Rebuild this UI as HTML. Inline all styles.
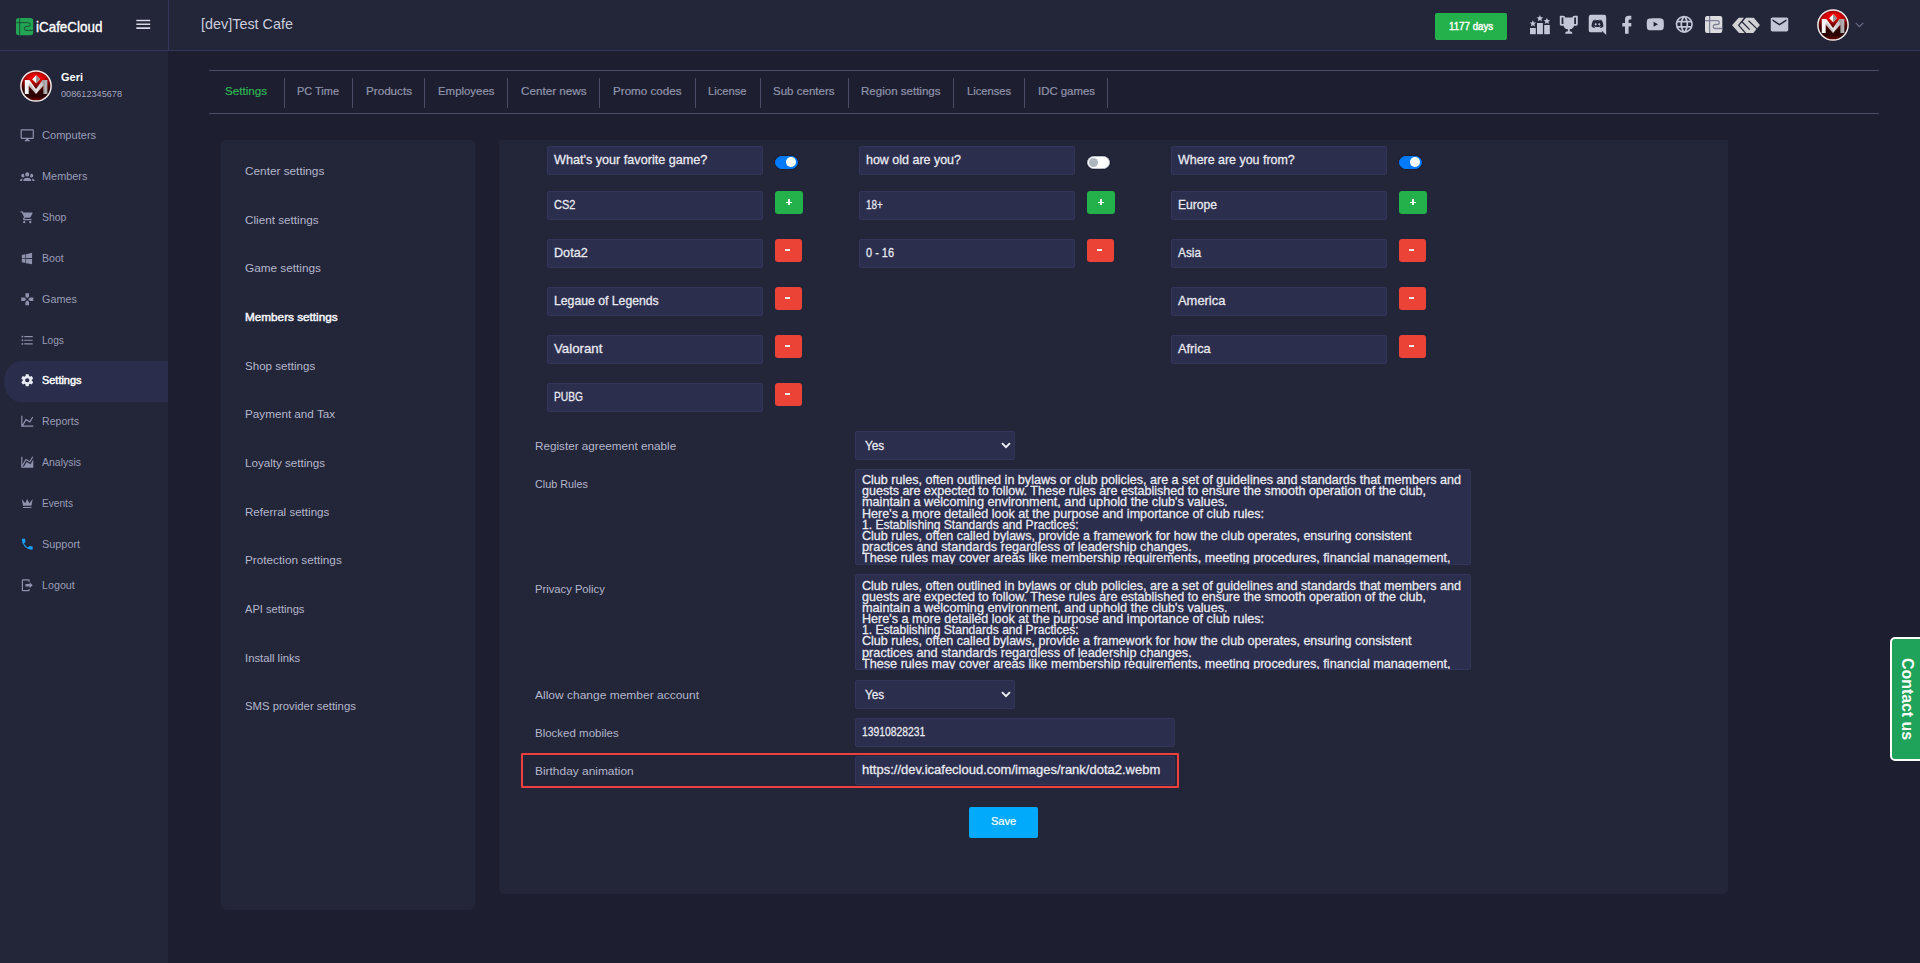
<!DOCTYPE html>
<html lang="en"><head><meta charset="utf-8"><title>iCafeCloud - Members settings</title>
<style>
*{box-sizing:border-box}
html,body{margin:0;padding:0}
header,aside,nav,section,main,footer{display:block;position:static}
body{width:1920px;height:963px;overflow:hidden;background:#1d1e30;font-family:'Liberation Sans', sans-serif;position:relative}
.t{position:absolute;white-space:pre;line-height:1;font-family:'Liberation Sans', sans-serif;transform-origin:0 50%}
.val{-webkit-text-stroke:.28px currentColor}
.logo{-webkit-text-stroke:.35px currentColor}
.tab{-webkit-text-stroke:.2px currentColor}
.semi{-webkit-text-stroke:.45px currentColor}
.ic{position:absolute;display:block;overflow:visible}
.hdr{position:absolute;left:0;top:0;width:1920px;height:51px;background:#232539;border-bottom:1px solid #33365a}
.hsep{position:absolute;left:168px;top:0;width:1px;height:50px;background:#33365a}
.side{position:absolute;left:0;top:51px;width:168px;height:912px;background:#232539}
.mact{position:absolute;left:4px;width:164px;height:41px;background:#2a2d4b;border-radius:17px 0 0 17px / 20.5px 0 0 20.5px}
.btn-days{position:absolute;background:#24b14b;border-radius:2px}
.hl{position:absolute;height:1px;background:#4a4c66}
.vl{position:absolute;width:1px;background:#4a4c66}
.panel{position:absolute;background:#232539}
.inp{position:absolute;height:28.7px;background:#2c2e4e;border:1px solid #33355a;border-radius:2px}
.tg{position:absolute;width:23.4px;height:13.4px;border-radius:7px;background:#fff;border:1px solid #b8bec6;box-shadow:0 0 0 .6px #17182a}
.tg i{position:absolute;left:1.4px;top:1.3px;width:8.8px;height:8.8px;border-radius:50%;background:#adb5bd}
.tg.on{background:#007bff;border-color:#007bff}
.tg.on i{left:10.1px;background:#fff;width:9.8px;height:9.8px;top:.4px}
.bplus,.bminus{position:absolute;height:23px;border-radius:3px}
.bplus{width:28px;background:#24b14b}
.bminus{width:27px;background:#eb4437}
.bplus b{position:absolute;left:11.2px;top:10.5px;width:6px;height:1.5px;background:#eefaf1}
.bplus s{position:absolute;left:13.45px;top:8.2px;width:1.5px;height:6px;background:#eefaf1}
.bminus b{position:absolute;left:10.4px;top:10.2px;width:5px;height:1.9px;background:#fbe9e7}
.hilite{position:absolute;border:2px solid #ef3f3f;border-radius:1px}
.btn-save{position:absolute;background:#02aafb;border-radius:2px}
.contact{position:absolute;left:1890px;top:637px;width:40px;height:124px;background:#1fa35b;border:2px solid #fff;border-radius:5px 0 0 5px}
.contact span{position:absolute;left:5.8px;top:19.3px;writing-mode:vertical-rl;font:bold 15.9px/19px 'Liberation Sans', sans-serif;color:#fff;white-space:nowrap}
</style></head>
<body>
<svg width="0" height="0" style="position:absolute"><defs>
<linearGradient id="avg" x1="0" y1="0" x2="0" y2="1"><stop offset="0" stop-color="#d80000"/><stop offset=".16" stop-color="#ff0404"/><stop offset=".32" stop-color="#d80000"/><stop offset=".5" stop-color="#7a0000"/><stop offset=".68" stop-color="#2c0000"/><stop offset=".84" stop-color="#360000"/><stop offset=".95" stop-color="#980000"/><stop offset="1" stop-color="#b00000"/></linearGradient>
<radialGradient id="avs" cx="50%" cy="45%" r="52%"><stop offset=".55" stop-color="#000" stop-opacity="0"/><stop offset="1" stop-color="#200" stop-opacity=".55"/></radialGradient>
<linearGradient id="avm" x1="0" y1="0" x2="1" y2="0"><stop offset="0" stop-color="#fbfbfb"/><stop offset=".5" stop-color="#e6e6e6"/><stop offset="1" stop-color="#a8a8a8"/></linearGradient>
</defs></svg>
<header>
<div class="hdr"></div><div class="hsep"></div>
<svg class="ic" style="left:16px;top:17.8px" width="17.2" height="17.2" viewBox="0 0 17.3 17.3"><rect width="17.3" height="17.3" rx="2.6" fill="#22a454"/><path d="M3.7 0.4V16.9M0.3 4.7H12.3Q14.3 4.7 14.3 6.6Q14.3 8.5 12.3 8.5H10.2Q8.3 8.5 8.3 10.5Q8.3 12.5 10.2 12.5H17" fill="none" stroke="#174a32" stroke-width="0.95"/></svg>
<svg class="ic" style="left:133.80px;top:14.60px" width="18.5" height="18.5" viewBox="0 0 24 24"><path fill="#d5d7e4" d="M3,6H21V8H3V6M3,11H21V13H3V11M3,16H21V18H3V16Z"/></svg>
<div class="btn-days" style="left:1435px;top:13px;width:72px;height:27px"></div>
<svg class="ic" style="left:1529px;top:14px" width="22" height="21" viewBox="0 0 22 21"><g fill="#c3c6d7">
<rect x="1" y="14" width="5.8" height="6.2"/><rect x="8" y="9" width="5.9" height="11.2"/><rect x="15.2" y="11" width="5.6" height="9.2"/>
<path id="st" d="M0,-3.4L0.95,-1.15L3.3,-1.05L1.5,0.5L2.05,2.85L0,1.6L-2.05,2.85L-1.5,0.5L-3.3,-1.05L-0.95,-1.15Z" transform="translate(3.9,9.6)"/>
<path d="M0,-3.4L0.95,-1.15L3.3,-1.05L1.5,0.5L2.05,2.85L0,1.6L-2.05,2.85L-1.5,0.5L-3.3,-1.05L-0.95,-1.15Z" transform="translate(10.9,4.4)"/>
<path d="M0,-3.4L0.95,-1.15L3.3,-1.05L1.5,0.5L2.05,2.85L0,1.6L-2.05,2.85L-1.5,0.5L-3.3,-1.05L-0.95,-1.15Z" transform="translate(17.9,7.2)"/>
</g></svg>
<svg class="ic" style="left:1558.20px;top:13.60px" width="21.6" height="21.6" viewBox="0 0 24 24"><path fill="#c3c6d7" d="M20.2,2H19.5H18C17.1,2 16,3 16,4H8C8,3 6.9,2 6,2H4.5H3.8H2V11C2,12 3,13 4,13H6.2C6.6,15 7.9,16.7 11,17V19.1C8.8,19.3 8,20.4 8,21.7V22H16V21.7C16,20.4 15.2,19.3 13,19.1V17C16.1,16.7 17.4,15 17.8,13H20C21,13 22,12 22,11V2H20.2M4,11V4H6V6V11C5.1,11 4.3,11 4,11M20,11C19.7,11 18.9,11 18,11V6V4H20V11Z"/></svg>
<svg class="ic" style="left:1587.20px;top:13.90px" width="20.952" height="20.952" viewBox="0 0 24 24"><path fill="#c3c6d7" d="M22,24L16.75,19L17.38,21H4.5A2.5,2.5 0 0,1 2,18.5V3.5A2.5,2.5 0 0,1 4.5,1H19.5A2.5,2.5 0 0,1 22,3.5V24M12,6.8C9.32,6.8 7.44,7.95 7.44,7.95C8.47,7.03 10.27,6.5 10.27,6.5L10.1,6.33C8.41,6.36 6.88,7.53 6.88,7.53C5.16,11.12 5.27,14.22 5.27,14.22C6.67,16.03 8.75,15.9 8.75,15.9L9.46,15C8.21,14.73 7.42,13.62 7.42,13.62C7.42,13.62 9.3,14.9 12,14.9C14.7,14.9 16.58,13.62 16.58,13.62C16.58,13.62 15.79,14.73 14.54,15L15.25,15.9C15.25,15.9 17.33,16.03 18.73,14.22C18.73,14.22 18.84,11.12 17.12,7.53C17.12,7.53 15.59,6.36 13.9,6.33L13.73,6.5C13.73,6.5 15.53,7.03 16.56,7.95C16.56,7.95 14.68,6.8 12,6.8M9.93,10.59C10.58,10.59 11.11,11.16 11.1,11.86C11.1,12.55 10.58,13.13 9.93,13.13C9.29,13.13 8.77,12.55 8.77,11.86C8.77,11.16 9.28,10.59 9.93,10.59M14.1,10.59C14.75,10.59 15.27,11.16 15.27,11.86C15.27,12.55 14.75,13.13 14.1,13.13C13.46,13.13 12.94,12.55 12.94,11.86C12.94,11.16 13.45,10.59 14.1,10.59Z"/></svg>
<svg class="ic" style="left:1615.50px;top:13.60px" width="21.6" height="21.6" viewBox="0 0 24 24"><path fill="#c3c6d7" d="M17,2V2H17V6H15C14.31,6 14,6.81 14,7.5V10H14L17,10V14H14V22H10V14H7V10H10V6A4,4 0 0,1 14,2H17Z"/></svg>
<svg class="ic" style="left:1645.20px;top:14.10px" width="20.6" height="20.6" viewBox="0 0 24 24"><path fill="#c3c6d7" d="M10,15L15.19,12L10,9V15M21.56,7.17C21.69,7.64 21.78,8.27 21.84,9.07C21.91,9.87 21.94,10.56 21.94,11.16L22,12C22,14.19 21.84,15.8 21.56,16.83C21.31,17.73 20.73,18.31 19.83,18.56C19.36,18.69 18.5,18.78 17.18,18.84C15.88,18.91 14.69,18.94 13.59,18.94L12,19C7.81,19 5.2,18.84 4.17,18.56C3.27,18.31 2.69,17.73 2.44,16.83C2.31,16.36 2.22,15.73 2.16,14.93C2.09,14.13 2.06,13.44 2.06,12.84L2,12C2,9.81 2.16,8.2 2.44,7.17C2.69,6.27 3.27,5.69 4.17,5.44C4.64,5.31 5.5,5.22 6.82,5.16C8.12,5.09 9.31,5.06 10.41,5.06L12,5C16.19,5 18.8,5.16 19.83,5.44C20.73,5.69 21.31,6.27 21.56,7.17Z"/></svg>
<svg class="ic" style="left:1674.30px;top:14.10px" width="20.6" height="20.6" viewBox="0 0 24 24"><path fill="#c3c6d7" d="M16.36,14C16.44,13.34 16.5,12.68 16.5,12C16.5,11.32 16.44,10.66 16.36,10H19.74C19.9,10.64 20,11.31 20,12C20,12.69 19.9,13.36 19.74,14M14.59,19.56C15.19,18.45 15.65,17.25 15.97,16H18.92C17.96,17.65 16.43,18.93 14.59,19.56M14.34,14H9.66C9.56,13.34 9.5,12.68 9.5,12C9.5,11.32 9.56,10.65 9.66,10H14.34C14.43,10.65 14.5,11.32 14.5,12C14.5,12.68 14.43,13.34 14.34,14M12,19.96C11.17,18.76 10.5,17.43 10.09,16H13.91C13.5,17.43 12.83,18.76 12,19.96M8,8H5.08C6.03,6.34 7.57,5.06 9.4,4.44C8.8,5.55 8.35,6.75 8,8M5.08,16H8C8.35,17.25 8.8,18.45 9.4,19.56C7.57,18.93 6.03,17.65 5.08,16M4.26,14C4.1,13.36 4,12.69 4,12C4,11.31 4.1,10.64 4.26,10H7.64C7.56,10.66 7.5,11.32 7.5,12C7.5,12.68 7.56,13.34 7.64,14M12,4.03C12.83,5.23 13.5,6.57 13.91,8H10.09C10.5,6.57 11.17,5.23 12,4.03M18.92,8H15.97C15.65,6.75 15.19,5.55 14.59,4.44C16.43,5.07 17.96,6.34 18.92,8M12,2C6.47,2 2,6.5 2,12A10,10 0 0,0 12,22A10,10 0 0,0 22,12A10,10 0 0,0 12,2Z"/></svg>
<svg class="ic" style="left:1705.3px;top:16.2px" width="17.3" height="17" viewBox="0 0 17.3 17"><rect width="17.3" height="17" rx="2.2" fill="#dcdcde"/><path d="M4.6 0V17M0 4.7H12.3Q14.3 4.7 14.3 6.6Q14.3 8.5 12.3 8.5H10.2Q8.3 8.5 8.3 10.5Q8.3 12.5 10.2 12.5H17.3" fill="none" stroke="#7d8097" stroke-width="1.3"/></svg>
<svg class="ic" style="left:1726px;top:12px" width="40" height="26" viewBox="0 0 40 26"><g fill="#d2d2d5">
<path d="M6.07 13.2L12.7 5.8H17.95L11.9 13.2L18.6 20.9H13Z"/>
<path d="M20 5.8H27.8L33.9 13L27.3 20.9H20.2L13.5 13.2Z"/></g>
<path d="M15.7 9.5L23.7 17.6M22.5 8.8L31.6 17.4" stroke="#232539" stroke-width="1.2" fill="none"/></svg>
<svg class="ic" style="left:1768.90px;top:14.00px" width="21" height="21" viewBox="0 0 24 24"><path fill="#c3c6d7" d="M20,8L12,13L4,8V6L12,11L20,6M20,4H4C2.89,4 2,4.89 2,6V18A2,2 0 0,0 4,20H20A2,2 0 0,0 22,18V6C22,4.89 21.1,4 20,4Z"/></svg>
<svg class="ic" style="left:1817px;top:9px" width="32" height="32" viewBox="0 0 32 32"><circle cx="16" cy="16" r="15.2" fill="url(#avg)"/><circle cx="16" cy="16" r="15.2" fill="url(#avs)"/><circle cx="16" cy="16" r="15.1" fill="none" stroke="#f3ecec" stroke-width="1.5"/><path d="M4.8 24.1 V10 H9.4 L16 19.1 L22.6 10 H27.4 V24.1 H23.5 V15.6 L16 24 L8.7 15.6 V24.1 Z" fill="url(#avm)"/><path d="M21.4 11.6 L23.5 15.6 V24.1 H25 V10 H22.6 Z" fill="#8d8d8d" opacity=".55"/><path d="M8.7 15.6 L16 24 L16 21.4 L9.6 13 Z" fill="#8d8d8d" opacity=".45"/><path d="M16.1 5.2 L20.1 9.2 L16.1 13.2 L12.1 9.2 Z" fill="#fafafa"/><path d="M16.1 5.2 L20.1 9.2 L16.1 13.2 Z" fill="#8f8f8f"/></svg>
<svg class="ic" style="left:1855px;top:22px" width="9" height="6" viewBox="0 0 9 6"><path d="M0.7 0.9 L4.5 4.7 L8.3 0.9" fill="none" stroke="#686d8a" stroke-width="1.2"/></svg>
<span class="t logo" style="left:35.50px;top:20.25px;font-size:14.2px;color:#ffffff;transform:scaleX(0.9458);">iCafeCloud</span>
<span class="t" style="left:201.00px;top:16.25px;font-size:15px;color:#cbcddc;transform:scaleX(0.9594);">[dev]Test Cafe</span>
<span class="t semi" style="left:1449.30px;top:21.25px;font-size:11px;color:#ffffff;transform:scaleX(0.8848);">1177 days</span>
</header>
<aside>
<div class="side"></div>
<svg class="ic" style="left:20px;top:70px" width="32" height="32" viewBox="0 0 32 32"><circle cx="16" cy="16" r="15.2" fill="url(#avg)"/><circle cx="16" cy="16" r="15.2" fill="url(#avs)"/><circle cx="16" cy="16" r="15.1" fill="none" stroke="#f3ecec" stroke-width="1.5"/><path d="M4.8 24.1 V10 H9.4 L16 19.1 L22.6 10 H27.4 V24.1 H23.5 V15.6 L16 24 L8.7 15.6 V24.1 Z" fill="url(#avm)"/><path d="M21.4 11.6 L23.5 15.6 V24.1 H25 V10 H22.6 Z" fill="#8d8d8d" opacity=".55"/><path d="M8.7 15.6 L16 24 L16 21.4 L9.6 13 Z" fill="#8d8d8d" opacity=".45"/><path d="M16.1 5.2 L20.1 9.2 L16.1 13.2 L12.1 9.2 Z" fill="#fafafa"/><path d="M16.1 5.2 L20.1 9.2 L16.1 13.2 Z" fill="#8f8f8f"/></svg>
<svg class="ic" style="left:19.50px;top:128.35px" width="14.5" height="14.5" viewBox="0 0 24 24"><path fill="#8d91ab" d="M21,16H3V4H21M21,2H3C1.89,2 1,2.89 1,4V16A2,2 0 0,0 3,18H10V20H8V22H16V20H14V18H21A2,2 0 0,0 23,16V4C23,2.89 22.1,2 21,2Z"/></svg>
<svg class="ic" style="left:19.50px;top:169.35px" width="14.5" height="14.5" viewBox="0 0 24 24"><path fill="#8d91ab" d="M12,5.5A3.5,3.5 0 0,1 15.5,9A3.5,3.5 0 0,1 12,12.5A3.5,3.5 0 0,1 8.5,9A3.5,3.5 0 0,1 12,5.5M5,8C5.56,8 6.08,8.15 6.53,8.42C6.38,9.85 6.8,11.27 7.66,12.38C7.16,13.34 6.16,14 5,14A3,3 0 0,1 2,11A3,3 0 0,1 5,8M19,8A3,3 0 0,1 22,11A3,3 0 0,1 19,14C17.84,14 16.84,13.34 16.34,12.38C17.2,11.27 17.62,9.85 17.47,8.42C17.92,8.15 18.44,8 19,8M5.5,18.25C5.5,16.18 8.41,14.5 12,14.5C15.59,14.5 18.5,16.18 18.5,18.25V20H5.5V18.25M0,20V18.5C0,17.11 1.89,15.94 4.45,15.6C3.86,16.28 3.5,17.22 3.5,18.25V20H0M24,20H20.5V18.25C20.5,17.22 20.14,16.28 19.55,15.6C22.11,15.94 24,17.11 24,18.5V20Z"/></svg>
<svg class="ic" style="left:19.50px;top:210.35px" width="14.5" height="14.5" viewBox="0 0 24 24"><path fill="#8d91ab" d="M17,18C15.89,18 15,18.89 15,20A2,2 0 0,0 17,22A2,2 0 0,0 19,20C19,18.89 18.1,18 17,18M1,2V4H3L6.6,11.59L5.24,14.04C5.09,14.32 5,14.65 5,15A2,2 0 0,0 7,17H19V15H7.42A0.25,0.25 0 0,1 7.17,14.75C7.17,14.7 7.18,14.66 7.2,14.63L8.1,13H15.55C16.3,13 16.96,12.58 17.3,11.97L20.88,5.5C20.95,5.34 21,5.17 21,5A1,1 0 0,0 20,4H5.21L4.27,2M7,18C5.89,18 5,18.89 5,20A2,2 0 0,0 7,22A2,2 0 0,0 9,20C9,18.89 8.1,18 7,18Z"/></svg>
<svg class="ic" style="left:19.50px;top:251.35px" width="14.5" height="14.5" viewBox="0 0 24 24"><path fill="#8d91ab" d="M3,12V6.75L9,5.43V11.91L3,12M20,3V11.75L10,11.9V5.21L20,3M3,13L9,13.09V19.9L3,18.75V13M20,13.25V22L10,20.09V13.1L20,13.25Z"/></svg>
<svg class="ic" style="left:19.50px;top:292.35px" width="14.5" height="14.5" viewBox="0 0 24 24"><path fill="#8d91ab" d="M16.5,9L13.5,12L16.5,15H22V9M9,16.5V22H15V16.5L12,13.5M7.5,9H2V15H7.5L10.5,12M15,7.5V2H9V7.5L12,10.5L15,7.5Z"/></svg>
<svg class="ic" style="left:19.50px;top:333.35px" width="14.5" height="14.5" viewBox="0 0 24 24"><path fill="#8d91ab" d="M7,5H21V7H7V5M7,13V11H21V13H7M4,4.5A1.5,1.5 0 0,1 5.5,6A1.5,1.5 0 0,1 4,7.5A1.5,1.5 0 0,1 2.5,6A1.5,1.5 0 0,1 4,4.5M4,10.5A1.5,1.5 0 0,1 5.5,12A1.5,1.5 0 0,1 4,13.5A1.5,1.5 0 0,1 2.5,12A1.5,1.5 0 0,1 4,10.5M7,19V17H21V19H7M4,16.5A1.5,1.5 0 0,1 5.5,18A1.5,1.5 0 0,1 4,19.5A1.5,1.5 0 0,1 2.5,18A1.5,1.5 0 0,1 4,16.5Z"/></svg>
<div class="mact" style="top:360.9px"></div>
<svg class="ic" style="left:19.50px;top:373.35px" width="14.5" height="14.5" viewBox="0 0 24 24"><path fill="#e6e8f2" d="M12,15.5A3.5,3.5 0 0,1 8.5,12A3.5,3.5 0 0,1 12,8.5A3.5,3.5 0 0,1 15.5,12A3.5,3.5 0 0,1 12,15.5M19.43,12.97C19.47,12.65 19.5,12.33 19.5,12C19.5,11.67 19.47,11.34 19.43,11L21.54,9.37C21.73,9.22 21.78,8.95 21.66,8.73L19.66,5.27C19.54,5.05 19.27,4.96 19.05,5.05L16.56,6.05C16.04,5.66 15.5,5.32 14.87,5.07L14.5,2.42C14.46,2.18 14.25,2 14,2H10C9.75,2 9.54,2.18 9.5,2.42L9.13,5.07C8.5,5.32 7.96,5.66 7.44,6.05L4.95,5.05C4.73,4.96 4.46,5.05 4.34,5.27L2.34,8.73C2.21,8.95 2.27,9.22 2.46,9.37L4.57,11C4.53,11.34 4.5,11.67 4.5,12C4.5,12.33 4.53,12.65 4.57,12.97L2.46,14.63C2.27,14.78 2.21,15.05 2.34,15.27L4.34,18.73C4.46,18.95 4.73,19.03 4.95,18.95L7.44,17.94C7.96,18.34 8.5,18.68 9.13,18.93L9.5,21.58C9.54,21.82 9.75,22 10,22H14C14.25,22 14.46,21.82 14.5,21.58L14.87,18.93C15.5,18.67 16.04,18.34 16.56,17.94L19.05,18.95C19.27,19.03 19.54,18.95 19.66,18.73L21.66,15.27C21.78,15.05 21.73,14.78 21.54,14.63L19.43,12.97Z"/></svg>
<svg class="ic" style="left:19.50px;top:414.35px" width="14.5" height="14.5" viewBox="0 0 24 24"><path fill="#8d91ab" d="M16,11.78L20.24,4.45L21.97,5.45L16.74,14.5L10.23,10.75L5.46,19H22V21H2V3H4V17.54L9.5,8L16,11.78Z"/></svg>
<svg class="ic" style="left:19.50px;top:455.35px" width="14.5" height="14.5" viewBox="0 0 24 24"><path fill="#8d91ab" d="M17.45,15.18L22,7.31V19L22,21H2V3H4V15.54L9.5,6L16,9.78L20.24,2.45L21.97,3.45L16.74,12.5L10.23,8.75L4.31,19H6.57L10.96,11.44L17.45,15.18Z"/></svg>
<svg class="ic" style="left:19.50px;top:496.35px" width="14.5" height="14.5" viewBox="0 0 24 24"><path fill="#8d91ab" d="M5,16L3,5L8.5,12L12,5L15.5,12L21,5L19,16H5M19,19A1,1 0 0,1 18,20H6A1,1 0 0,1 5,19V18H19V19Z"/></svg>
<svg class="ic" style="left:19.50px;top:537.35px" width="14.5" height="14.5" viewBox="0 0 24 24"><path fill="#18a0fb" d="M6.62,10.79C8.06,13.62 10.38,15.94 13.21,17.38L15.41,15.18C15.69,14.9 16.08,14.82 16.43,14.93C17.55,15.3 18.75,15.5 20,15.5A1,1 0 0,1 21,16.5V20A1,1 0 0,1 20,21A17,17 0 0,1 3,4A1,1 0 0,1 4,3H7.5A1,1 0 0,1 8.5,4C8.5,5.25 8.7,6.45 9.07,7.57C9.18,7.92 9.1,8.31 8.82,8.59L6.62,10.79Z"/></svg>
<svg class="ic" style="left:19.50px;top:578.35px" width="14.5" height="14.5" viewBox="0 0 24 24"><path fill="#8d91ab" d="M16,17V14H9V10H16V7L21,12L16,17M14,2A2,2 0 0,1 16,4V6H14V4H5V20H14V18H16V20A2,2 0 0,1 14,22H5A2,2 0 0,1 3,20V4A2,2 0 0,1 5,2H14Z"/></svg>
<span class="t" style="left:61.00px;top:72.25px;font-size:11.5px;color:#ffffff;font-weight:700;transform:scaleX(0.9559);">Geri</span>
<span class="t" style="left:61.00px;top:89.25px;font-size:10px;color:#a3a7bd;transform:scale(0.9139,0.84);transform-origin:0 8px;">008612345678</span>
<span class="t" style="left:42.40px;top:130.25px;font-size:11px;color:#9a9eb6;transform:scaleX(1.0056);">Computers</span>
<span class="t" style="left:42.40px;top:171.25px;font-size:11px;color:#9a9eb6;transform:scaleX(0.9903);">Members</span>
<span class="t" style="left:42.40px;top:212.25px;font-size:11px;color:#9a9eb6;transform:scaleX(0.9493);">Shop</span>
<span class="t" style="left:42.40px;top:253.25px;font-size:11px;color:#9a9eb6;transform:scaleX(0.9585);">Boot</span>
<span class="t" style="left:42.40px;top:294.25px;font-size:11px;color:#9a9eb6;transform:scaleX(0.9840);">Games</span>
<span class="t" style="left:42.40px;top:335.25px;font-size:11px;color:#9a9eb6;transform:scaleX(0.9179);">Logs</span>
<span class="t semi" style="left:42.40px;top:375.25px;font-size:11px;color:#ffffff;transform:scaleX(0.9937);">Settings</span>
<span class="t" style="left:42.40px;top:416.25px;font-size:11px;color:#9a9eb6;transform:scaleX(0.9603);">Reports</span>
<span class="t" style="left:42.40px;top:457.25px;font-size:11px;color:#9a9eb6;transform:scaleX(0.9544);">Analysis</span>
<span class="t" style="left:42.40px;top:498.25px;font-size:11px;color:#9a9eb6;transform:scaleX(0.9215);">Events</span>
<span class="t" style="left:42.40px;top:539.25px;font-size:11px;color:#9a9eb6;transform:scaleX(0.9888);">Support</span>
<span class="t" style="left:42.40px;top:580.25px;font-size:11px;color:#9a9eb6;transform:scaleX(0.9746);">Logout</span>
</aside>
<nav>
<div class="hl" style="left:209px;top:70px;width:1670px"></div><div class="hl" style="left:209px;top:113px;width:1670px"></div>
<div class="vl" style="left:284px;top:78px;height:30px"></div>
<div class="vl" style="left:352px;top:78px;height:30px"></div>
<div class="vl" style="left:424px;top:78px;height:30px"></div>
<div class="vl" style="left:507px;top:78px;height:30px"></div>
<div class="vl" style="left:599px;top:78px;height:30px"></div>
<div class="vl" style="left:695px;top:78px;height:30px"></div>
<div class="vl" style="left:760px;top:78px;height:30px"></div>
<div class="vl" style="left:848px;top:78px;height:30px"></div>
<div class="vl" style="left:953px;top:78px;height:30px"></div>
<div class="vl" style="left:1024px;top:78px;height:30px"></div>
<div class="vl" style="left:1107px;top:78px;height:30px"></div>
<span class="t tab" style="left:224.50px;top:86.25px;font-size:11px;color:#2db552;transform:scaleX(1.0566);">Settings</span>
<span class="t tab" style="left:297.00px;top:86.25px;font-size:11px;color:#9195ab;transform:scaleX(0.9956);">PC Time</span>
<span class="t tab" style="left:365.50px;top:86.25px;font-size:11px;color:#9195ab;transform:scaleX(1.0594);">Products</span>
<span class="t tab" style="left:438.00px;top:86.25px;font-size:11px;color:#9195ab;transform:scaleX(1.0382);">Employees</span>
<span class="t tab" style="left:521.00px;top:86.25px;font-size:11px;color:#9195ab;transform:scaleX(1.0605);">Center news</span>
<span class="t tab" style="left:613.00px;top:86.25px;font-size:11px;color:#9195ab;transform:scaleX(1.0569);">Promo codes</span>
<span class="t tab" style="left:708.00px;top:86.25px;font-size:11px;color:#9195ab;transform:scaleX(1.0152);">License</span>
<span class="t tab" style="left:773.00px;top:86.25px;font-size:11px;color:#9195ab;transform:scaleX(1.0476);">Sub centers</span>
<span class="t tab" style="left:861.00px;top:86.25px;font-size:11px;color:#9195ab;transform:scaleX(1.0484);">Region settings</span>
<span class="t tab" style="left:967.00px;top:86.25px;font-size:11px;color:#9195ab;transform:scaleX(1.0133);">Licenses</span>
<span class="t tab" style="left:1037.50px;top:86.25px;font-size:11px;color:#9195ab;transform:scaleX(1.0358);">IDC games</span>
</nav>
<section>
<div class="panel" style="left:221px;top:140px;width:254px;height:770px;border-radius:5px"></div>
<span class="t" style="left:244.50px;top:166.25px;font-size:11px;color:#b4b7cb;transform:scaleX(1.0718);">Center settings</span>
<span class="t" style="left:244.50px;top:215.25px;font-size:11px;color:#b4b7cb;transform:scaleX(1.0638);">Client settings</span>
<span class="t" style="left:244.50px;top:263.25px;font-size:11px;color:#b4b7cb;transform:scaleX(1.0716);">Game settings</span>
<span class="t semi" style="left:244.50px;top:312.25px;font-size:11px;color:#f6f7fb;transform:scaleX(1.0667);">Members settings</span>
<span class="t" style="left:244.50px;top:361.25px;font-size:11px;color:#b4b7cb;transform:scaleX(1.0532);">Shop settings</span>
<span class="t" style="left:244.50px;top:409.25px;font-size:11px;color:#b4b7cb;transform:scaleX(1.0625);">Payment and Tax</span>
<span class="t" style="left:244.50px;top:458.25px;font-size:11px;color:#b4b7cb;transform:scaleX(1.0563);">Loyalty settings</span>
<span class="t" style="left:244.50px;top:507.25px;font-size:11px;color:#b4b7cb;transform:scaleX(1.0525);">Referral settings</span>
<span class="t" style="left:244.50px;top:555.25px;font-size:11px;color:#b4b7cb;transform:scaleX(1.0696);">Protection settings</span>
<span class="t" style="left:244.50px;top:604.25px;font-size:11px;color:#b4b7cb;transform:scaleX(1.0119);">API settings</span>
<span class="t" style="left:244.50px;top:653.25px;font-size:11px;color:#b4b7cb;transform:scaleX(1.0261);">Install links</span>
<span class="t" style="left:244.50px;top:701.25px;font-size:11px;color:#b4b7cb;transform:scaleX(1.0306);">SMS provider settings</span>
</section>
<main>
<div class="panel" style="left:499px;top:140px;width:1229px;height:754px;border-radius:0 0 5px 5px"></div>
<div class="inp" style="left:547px;top:146px;width:216px"></div>
<div class="tg on" style="left:775px;top:156px"><i></i></div>
<div class="inp" style="left:547px;top:191px;width:216px"></div>
<div class="bplus" style="left:775px;top:191px"><b></b><s></s></div>
<div class="inp" style="left:547px;top:239px;width:216px"></div>
<div class="bminus" style="left:775px;top:239px"><b></b></div>
<div class="inp" style="left:547px;top:287px;width:216px"></div>
<div class="bminus" style="left:775px;top:287px"><b></b></div>
<div class="inp" style="left:547px;top:335px;width:216px"></div>
<div class="bminus" style="left:775px;top:335px"><b></b></div>
<div class="inp" style="left:547px;top:383px;width:216px"></div>
<div class="bminus" style="left:775px;top:383px"><b></b></div>
<div class="inp" style="left:859px;top:146px;width:216px"></div>
<div class="tg" style="left:1087px;top:156px"><i></i></div>
<div class="inp" style="left:859px;top:191px;width:216px"></div>
<div class="bplus" style="left:1087px;top:191px"><b></b><s></s></div>
<div class="inp" style="left:859px;top:239px;width:216px"></div>
<div class="bminus" style="left:1087px;top:239px"><b></b></div>
<div class="inp" style="left:1171px;top:146px;width:216px"></div>
<div class="tg on" style="left:1399px;top:156px"><i></i></div>
<div class="inp" style="left:1171px;top:191px;width:216px"></div>
<div class="bplus" style="left:1399px;top:191px"><b></b><s></s></div>
<div class="inp" style="left:1171px;top:239px;width:216px"></div>
<div class="bminus" style="left:1399px;top:239px"><b></b></div>
<div class="inp" style="left:1171px;top:287px;width:216px"></div>
<div class="bminus" style="left:1399px;top:287px"><b></b></div>
<div class="inp" style="left:1171px;top:335px;width:216px"></div>
<div class="bminus" style="left:1399px;top:335px"><b></b></div>
<div class="inp" style="left:855px;top:431px;width:160px"></div>
<svg class="ic" style="left:1001.2px;top:441.8px" width="10" height="7" viewBox="0 0 10 7"><path d="M1 1.2 L5 5.2 L9 1.2" fill="none" stroke="#f0f1f6" stroke-width="1.9"/></svg>
<div class="inp" style="left:855px;top:680.3px;width:160px"></div>
<svg class="ic" style="left:1001.2px;top:691.0999999999999px" width="10" height="7" viewBox="0 0 10 7"><path d="M1 1.2 L5 5.2 L9 1.2" fill="none" stroke="#f0f1f6" stroke-width="1.9"/></svg>
<div class="inp ta" style="left:855px;top:469.1px;width:616px;height:95.5px"></div>
<div class="inp ta" style="left:855px;top:574.2px;width:616px;height:95.5px"></div>
<div class="inp" style="left:855px;top:718.3px;width:320px"></div>
<div class="hilite" style="left:521px;top:753px;width:658px;height:35px"></div>
<div class="inp" style="left:855px;top:756.2px;width:320px"></div>
<div class="btn-save" style="left:969px;top:807px;width:69px;height:31px"></div>
<span class="t val" style="left:553.70px;top:153.25px;font-size:13px;color:#e9eaf1;transform:scaleX(0.9719);">What's your favorite game?</span>
<span class="t val" style="left:553.70px;top:198.25px;font-size:13px;color:#e9eaf1;transform:scaleX(0.8460);">CS2</span>
<span class="t val" style="left:553.70px;top:246.25px;font-size:13px;color:#e9eaf1;transform:scaleX(0.9711);">Dota2</span>
<span class="t val" style="left:553.70px;top:294.25px;font-size:13px;color:#e9eaf1;transform:scaleX(0.9405);">Legaue of Legends</span>
<span class="t val" style="left:553.70px;top:342.25px;font-size:13px;color:#e9eaf1;transform:scaleX(1.0196);">Valorant</span>
<span class="t val" style="left:553.70px;top:390.25px;font-size:13px;color:#e9eaf1;transform:scaleX(0.7871);">PUBG</span>
<span class="t val" style="left:865.70px;top:153.25px;font-size:13px;color:#e9eaf1;transform:scaleX(0.9594);">how old are you?</span>
<span class="t val" style="left:865.70px;top:198.25px;font-size:13px;color:#e9eaf1;transform:scaleX(0.7569);">18+</span>
<span class="t val" style="left:865.70px;top:246.25px;font-size:13px;color:#e9eaf1;transform:scaleX(0.8421);">0 - 16</span>
<span class="t val" style="left:1177.70px;top:153.25px;font-size:13px;color:#e9eaf1;transform:scaleX(0.9557);">Where are you from?</span>
<span class="t val" style="left:1177.70px;top:198.25px;font-size:13px;color:#e9eaf1;transform:scaleX(0.9303);">Europe</span>
<span class="t val" style="left:1177.70px;top:246.25px;font-size:13px;color:#e9eaf1;transform:scaleX(0.9092);">Asia</span>
<span class="t val" style="left:1177.70px;top:294.25px;font-size:13px;color:#e9eaf1;transform:scaleX(0.9940);">America</span>
<span class="t val" style="left:1177.70px;top:342.25px;font-size:13px;color:#e9eaf1;transform:scaleX(0.9839);">Africa</span>
<span class="t" style="left:535.40px;top:441.25px;font-size:11px;color:#b4b7cb;transform:scaleX(1.0640);">Register agreement enable</span>
<span class="t" style="left:535.40px;top:479.25px;font-size:11px;color:#b4b7cb;transform:scaleX(0.9830);">Club Rules</span>
<span class="t" style="left:535.40px;top:584.25px;font-size:11px;color:#b4b7cb;transform:scaleX(1.0194);">Privacy Policy</span>
<span class="t" style="left:535.40px;top:690.25px;font-size:11px;color:#b4b7cb;transform:scaleX(1.0903);">Allow change member account</span>
<span class="t" style="left:535.40px;top:728.25px;font-size:11px;color:#b4b7cb;transform:scaleX(1.0450);">Blocked mobiles</span>
<span class="t" style="left:535.40px;top:766.25px;font-size:11px;color:#b4b7cb;transform:scaleX(1.0833);">Birthday animation</span>
<span class="t val" style="left:864.50px;top:439.25px;font-size:13px;color:#e9eaf1;transform:scaleX(0.9049);">Yes</span>
<span class="t val" style="left:864.50px;top:688.25px;font-size:13px;color:#e9eaf1;transform:scaleX(0.9049);">Yes</span>
<span class="t val" style="left:862.00px;top:473.25px;font-size:13px;color:#e9eaf1;transform:scaleX(0.9672);">Club rules, often outlined in bylaws or club policies, are a set of guidelines and standards that members and</span>
<span class="t val" style="left:862.00px;top:484.25px;font-size:13px;color:#e9eaf1;transform:scaleX(0.9639);">guests are expected to follow. These rules are established to ensure the smooth operation of the club,</span>
<span class="t val" style="left:862.00px;top:495.25px;font-size:13px;color:#e9eaf1;transform:scaleX(0.9758);">maintain a welcoming environment, and uphold the club's values.</span>
<span class="t val" style="left:862.00px;top:507.25px;font-size:13px;color:#e9eaf1;transform:scaleX(0.9684);">Here's a more detailed look at the purpose and importance of club rules:</span>
<span class="t val" style="left:862.00px;top:518.25px;font-size:13px;color:#e9eaf1;transform:scaleX(0.9279);">1. Establishing Standards and Practices:</span>
<span class="t val" style="left:862.00px;top:529.25px;font-size:13px;color:#e9eaf1;transform:scaleX(0.9650);">Club rules, often called bylaws, provide a framework for how the club operates, ensuring consistent</span>
<span class="t val" style="left:862.00px;top:540.25px;font-size:13px;color:#e9eaf1;transform:scaleX(0.9790);">practices and standards regardless of leadership changes.</span>
<span class="t val" style="left:862.00px;top:551.25px;font-size:13px;color:#e9eaf1;transform:scaleX(0.9719);clip-path:inset(0 0 0.4px 0);">These rules may cover areas like membership requirements, meeting procedures, financial management,</span>
<span class="t val" style="left:862.00px;top:579.25px;font-size:13px;color:#e9eaf1;transform:scaleX(0.9672);">Club rules, often outlined in bylaws or club policies, are a set of guidelines and standards that members and</span>
<span class="t val" style="left:862.00px;top:590.25px;font-size:13px;color:#e9eaf1;transform:scaleX(0.9639);">guests are expected to follow. These rules are established to ensure the smooth operation of the club,</span>
<span class="t val" style="left:862.00px;top:601.25px;font-size:13px;color:#e9eaf1;transform:scaleX(0.9758);">maintain a welcoming environment, and uphold the club's values.</span>
<span class="t val" style="left:862.00px;top:612.25px;font-size:13px;color:#e9eaf1;transform:scaleX(0.9684);">Here's a more detailed look at the purpose and importance of club rules:</span>
<span class="t val" style="left:862.00px;top:623.25px;font-size:13px;color:#e9eaf1;transform:scaleX(0.9279);">1. Establishing Standards and Practices:</span>
<span class="t val" style="left:862.00px;top:634.25px;font-size:13px;color:#e9eaf1;transform:scaleX(0.9650);">Club rules, often called bylaws, provide a framework for how the club operates, ensuring consistent</span>
<span class="t val" style="left:862.00px;top:646.25px;font-size:13px;color:#e9eaf1;transform:scaleX(0.9790);">practices and standards regardless of leadership changes.</span>
<span class="t val" style="left:862.00px;top:657.25px;font-size:13px;color:#e9eaf1;transform:scaleX(0.9719);clip-path:inset(0 0 1.3px 0);">These rules may cover areas like membership requirements, meeting procedures, financial management,</span>
<span class="t val" style="left:861.50px;top:725.25px;font-size:13px;color:#e9eaf1;transform:scaleX(0.7947);">13910828231</span>
<span class="t val" style="left:861.50px;top:763.25px;font-size:13px;color:#e9eaf1;transform:scaleX(1.0004);">https://dev.icafecloud.com/images/rank/dota2.webm</span>
<span class="t tab" style="left:990.60px;top:816.25px;font-size:11px;color:#ffffff;transform:scaleX(1.0009);">Save</span>
</main>
<footer>
<div class="contact"><span>Contact us</span></div>

</footer>

</body></html>
